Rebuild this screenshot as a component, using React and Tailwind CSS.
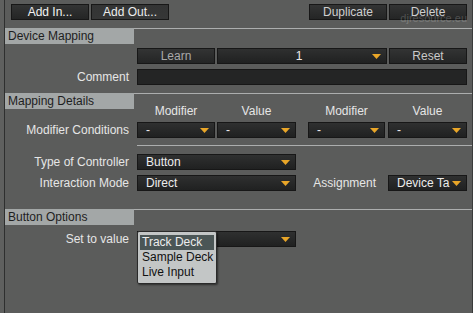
import React from 'react';

const Arrow = () => (
  <svg width="9" height="5" viewBox="0 0 9 5" className="shrink-0">
    <path d="M0 0 H9 L4.5 5 Z" fill="#e9a628" />
  </svg>
);

const Btn = ({ children, className = '' }) => (
  <div
    className={`h-[16px] flex items-center justify-center border border-[#171717] bg-linear-to-b from-[#333434] to-[#242525] text-[12px] leading-none ${className}`}
  >
    {children}
  </div>
);

const Drop = ({ children, className = '', center = false }) => (
  <div
    className={`h-[16px] flex items-center border border-[#171717] bg-linear-to-b from-[#2f3030] to-[#202121] text-[12px] leading-none text-[#ececec] pr-[5px] ${className}`}
  >
    <div className={`flex-1 overflow-hidden whitespace-nowrap ${center ? 'text-center pl-[8px]' : 'pl-[8px]'}`}>
      {children}
    </div>
    <Arrow />
  </div>
);

const Label = ({ children }) => (
  <div className="w-[132px] pr-[8px] text-right text-[12px] leading-none text-[#e6e6e6] shrink-0">{children}</div>
);

const Section = ({ title, children }) => (
  <div className="border-t border-[#acaeae]">
    <div className="-mt-px h-[16px] w-[129px] bg-[#a3a7a7] text-[#1e1e1e] text-[12px] leading-none pl-[3px] flex items-center">
      {title}
    </div>
    {children}
  </div>
);

export default function App() {
  return (
    <div className="w-[473px] h-[313px] bg-[#5b5c5b] flex overflow-hidden font-['Liberation_Sans',Arial,sans-serif]">
      <div className="w-[4px] bg-[#5f605f]" />
      <div className="w-px bg-[#2e2f2f]" />
      <div className="flex-1 flex flex-col relative">
        {/* toolbar */}
        <div className="flex items-center pt-[4px] pl-[6px] pr-[5px]">
          <Btn className="w-[78px] from-[#262727] to-[#1e1f1f] text-[#f2f2f2]">Add In...</Btn>
          <Btn className="w-[78px] ml-[2px] from-[#3d3e3e] to-[#363737] border-[#444] text-[#ededed]">Add Out...</Btn>
          <div className="flex-1" />
          <Btn className="w-[78px] text-[#cfcfcf]">Duplicate</Btn>
          <Btn className="w-[78px] ml-[2px] text-[#cfcfcf]">Delete</Btn>
        </div>
        <div className="absolute right-[5px] top-[13px] text-[11px] leading-none text-white/20 pointer-events-none">
          djresource.eu
        </div>

        {/* Device Mapping */}
        <div className="mt-[8px]">
          <Section title="Device Mapping">
            <div className="flex items-center mt-[4px]">
              <div className="w-[132px]" />
              <Btn className="w-[78px] text-[#a9a9a9]">Learn</Btn>
              <Drop className="w-[170px] ml-[2px]" center>1</Drop>
              <Btn className="w-[78px] ml-[2px] text-[#c9c9c9]">Reset</Btn>
            </div>
            <div className="flex items-center mt-[5px]">
              <Label>Comment</Label>
              <div className="w-[330px] h-[16px] border border-[#171717] bg-[#242525]" />
            </div>
          </Section>
        </div>

        {/* Mapping Details */}
        <div className="mt-[8px]">
          <Section title="Mapping Details">
            <div className="flex -mt-[5px] pl-[132px] text-[12px] leading-[14px] text-[#e6e6e6]">
              <div className="w-[78px] text-center">Modifier</div>
              <div className="w-[79px] ml-[2px] text-center">Value</div>
              <div className="w-[77px] ml-[12px] text-center">Modifier</div>
              <div className="w-[79px] ml-[3px] text-center">Value</div>
            </div>
            <div className="flex items-center mt-[4px]">
              <Label>Modifier Conditions</Label>
              <Drop className="w-[78px]">-</Drop>
              <Drop className="w-[79px] ml-[2px]">-</Drop>
              <Drop className="w-[77px] ml-[12px]">-</Drop>
              <Drop className="w-[79px] ml-[3px]">-</Drop>
            </div>
            <div className="ml-[132px] mt-[7px] border-t border-[#acaeae]" />
            <div className="flex items-center mt-[8px]">
              <Label>Type of Controller</Label>
              <Drop className="w-[159px]">Button</Drop>
            </div>
            <div className="flex items-center mt-[5px]">
              <Label>Interaction Mode</Label>
              <Drop className="w-[159px]">Direct</Drop>
              <div className="w-[92px] pr-[12px] text-right text-[12px] leading-none text-[#e6e6e6]">Assignment</div>
              <Drop className="w-[79px]">Device Ta</Drop>
            </div>
          </Section>
        </div>

        {/* Button Options */}
        <div className="mt-[18px]">
          <Section title="Button Options">
            <div className="flex items-center mt-[6px]">
              <Label>Set to value</Label>
              <div className="relative">
                <Drop className="w-[159px]"> </Drop>
                <div className="absolute left-0 top-0 w-[80px] h-[53px] bg-[#c3c6c6] border border-[#2a2a2a] rounded-[2px] shadow-[1px_1px_2px_rgba(0,0,0,0.5)] px-[2px] pt-[3px] text-[12px] leading-[15px] text-[#111]">
                  <div className="bg-[#4b5656] text-[#ededed] pl-[2px] h-[15px]">Track Deck</div>
                  <div className="pl-[2px] h-[15px]">Sample Deck</div>
                  <div className="pl-[2px] h-[15px]">Live Input</div>
                </div>
              </div>
            </div>
          </Section>
        </div>
      </div>
      <div className="w-px bg-[#3a3b3b]" />
    </div>
  );
}
